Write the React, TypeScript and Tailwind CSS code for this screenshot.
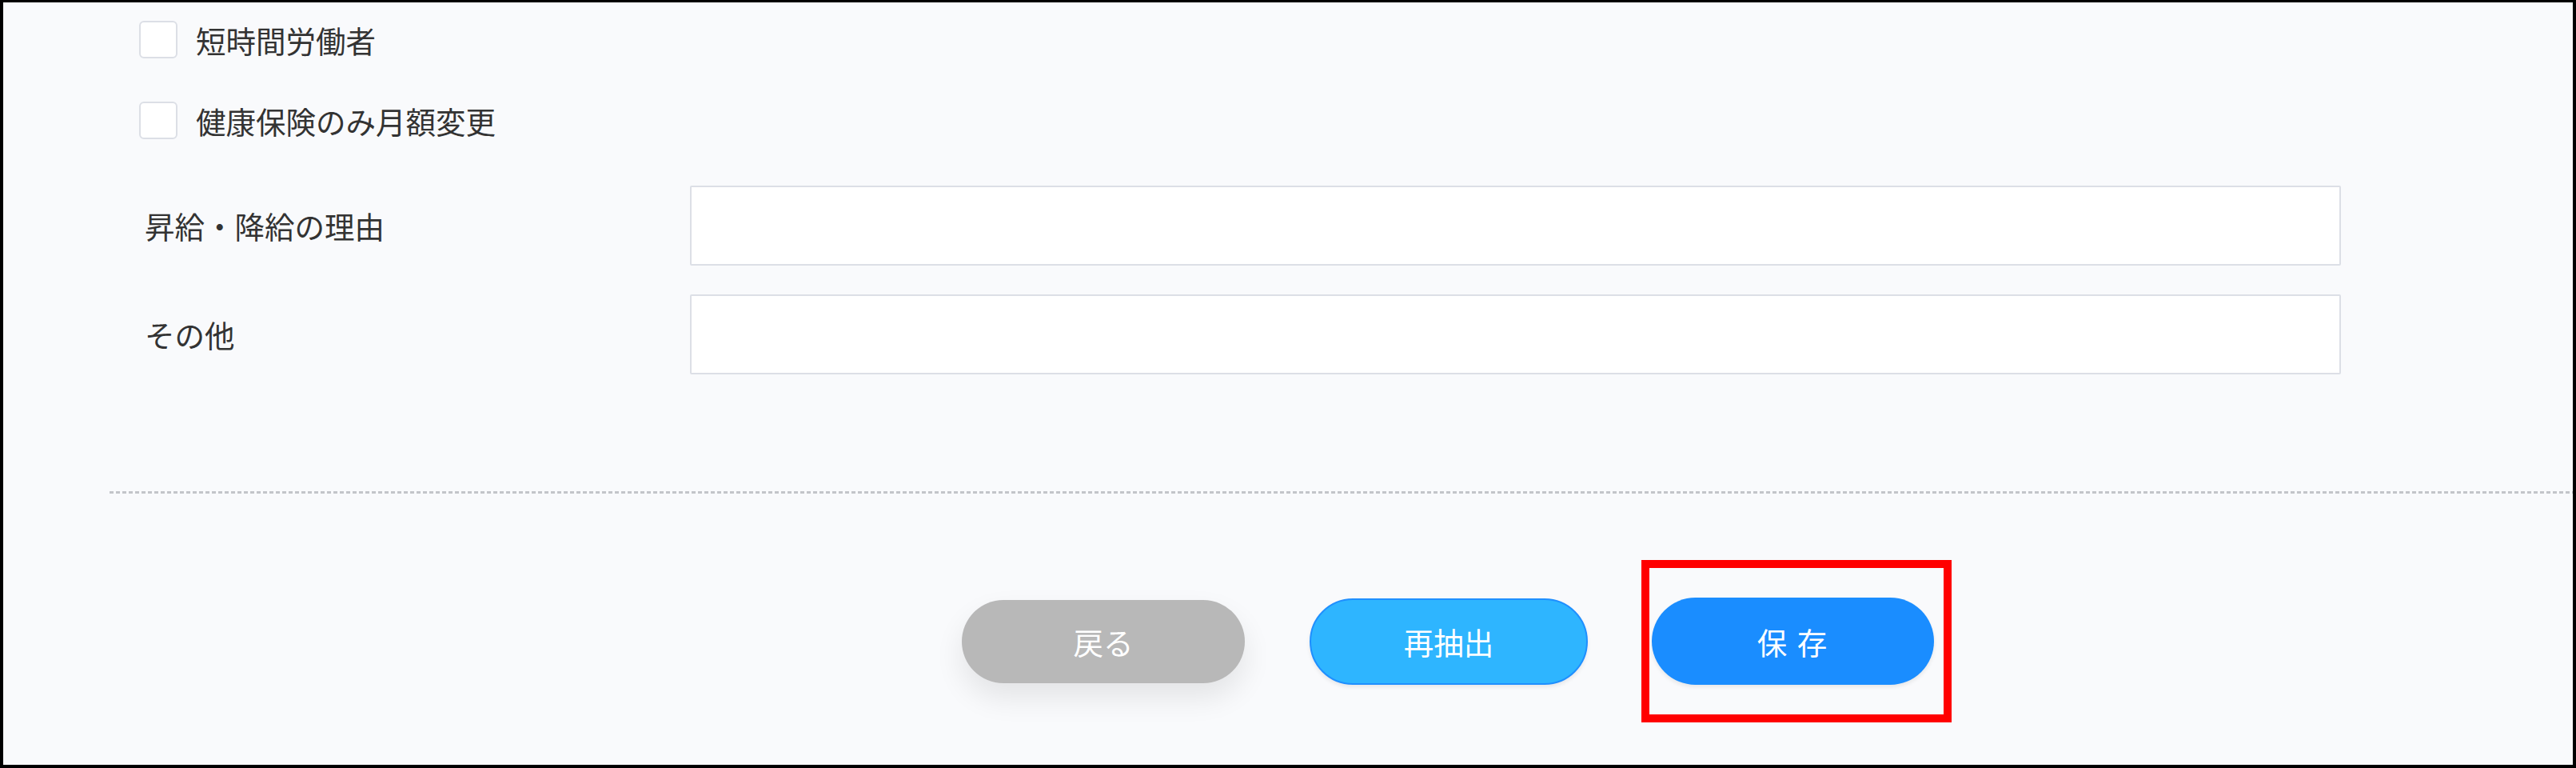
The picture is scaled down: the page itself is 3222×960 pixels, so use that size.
const font = "font-['Noto_Sans_CJK_JP','Noto_Sans',sans-serif]";

function CheckRow({ label, className }: { label: string; className?: string }) {
  return (
    <label className={`flex items-center h-[47px] ${className ?? ""}`}>
      <span className="block w-[48px] h-[47px] rounded-[6px] border-2 border-[#dcdfe6] bg-white" />
      <span className="ml-[23px] text-[37.5px] leading-none text-[#333333]">{label}</span>
    </label>
  );
}

function FieldRow({ label, className }: { label: string; className?: string }) {
  return (
    <div className={`flex items-center pl-[7px] ${className ?? ""}`}>
      <span className="w-[682px] text-[37.5px] leading-none text-[#333333]">{label}</span>
      <input
        type="text"
        className="w-[2065px] h-[100px] bg-white border-2 border-[#dcdfe6] rounded-[2px] outline-none px-4 text-[37.5px]"
      />
    </div>
  );
}

export default function App() {
  return (
    <div
      className={`w-[3222px] h-[960px] bg-[#f9fafc] border-x-4 border-t-[3px] border-b-4 border-black flex flex-col ${font}`}
    >
      <div className="pl-[170px] pt-[23px] flex flex-col">
        <CheckRow label="短時間労働者" />
        <CheckRow label="健康保険のみ月額変更" className="mt-[54px]" />
        <FieldRow label="昇給・降給の理由" className="mt-[58px]" />
        <FieldRow label="その他" className="mt-[36px]" />
      </div>

      <div className="ml-[133px] mt-[146px] h-[3px] bg-[image:repeating-linear-gradient(90deg,#c3c5ca_0_5px,transparent_5px_8px)]" />

      <div className="flex items-center pl-[1199px] mt-[130px]">
        <button className="w-[354px] h-[104px] rounded-full bg-[#b8b8b8] text-white text-[37.5px] leading-none shadow-[0_18px_36px_rgba(0,0,0,0.09)]">
          戻る
        </button>
        <button className="ml-[81px] w-[348px] h-[108px] rounded-full bg-[#2eb5ff] border-2 border-[#1f8fff] text-white text-[37.5px] leading-none shadow-[0_3px_5px_rgba(0,0,0,0.08)]">
          再抽出
        </button>
        <div className="relative ml-[80px]">
          <button className="w-[353px] h-[109px] rounded-full bg-[#1a8dff] text-white text-[37.5px] leading-none tracking-[2px] shadow-[0_3px_5px_rgba(0,0,0,0.08)]">
            保 存
          </button>
          <span className="absolute -left-[13px] -right-[22px] -top-[47px] -bottom-[47px] border-[10px] border-[#ff0000] pointer-events-none" />
        </div>
      </div>
    </div>
  );
}
